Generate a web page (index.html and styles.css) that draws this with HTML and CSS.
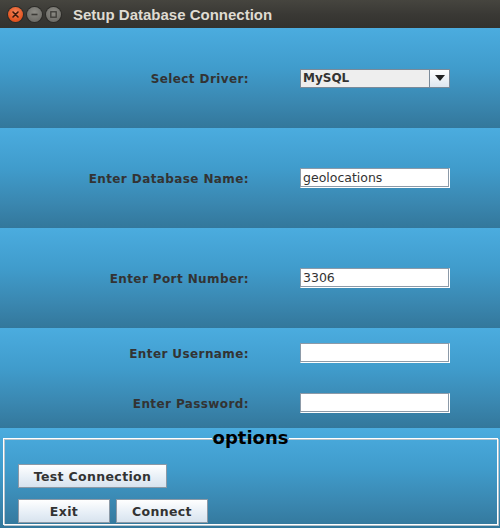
FILE: index.html
```html
<!DOCTYPE html>
<html>
<head>
<meta charset="utf-8">
<link rel="stylesheet" href="styles.css">
</head>
<body>
<div class="window">
  <div class="titlebar">
    <div class="wbtns">
      <span class="wbtn close"><svg width="15" height="15" viewBox="0 0 15 15"><path d="M5 5l5 5M10 5l-5 5" stroke="#3a1a0c" stroke-width="1.6" stroke-linecap="round"/></svg></span>
      <span class="wbtn"><svg width="15" height="15" viewBox="0 0 15 15"><path d="M4.5 7.5h6" stroke="#3c3b37" stroke-width="1.6"/></svg></span>
      <span class="wbtn"><svg width="15" height="15" viewBox="0 0 15 15"><rect x="4.8" y="4.8" width="5.4" height="5.4" fill="none" stroke="#3c3b37" stroke-width="1.3"/></svg></span>
    </div>
    <div class="title">Setup Database Connection</div>
  </div>

  <div class="panel">
    <div class="row">
      <label class="lbl">Select Driver:</label>
      <div class="combo"><span class="combo-text">MySQL</span><span class="combo-arrow"><svg width="10" height="6" viewBox="0 0 10 6"><path d="M0 0h10L5 6z" fill="#222"/></svg></span></div>
    </div>
  </div>

  <div class="panel">
    <div class="row">
      <label class="lbl">Enter Database Name:</label>
      <div class="field">geolocations</div>
    </div>
  </div>

  <div class="panel">
    <div class="row">
      <label class="lbl">Enter Port Number:</label>
      <div class="field">3306</div>
    </div>
  </div>

  <div class="panel two">
    <div class="row">
      <label class="lbl">Enter Username:</label>
      <div class="field"></div>
    </div>
    <div class="row">
      <label class="lbl">Enter Password:</label>
      <div class="field"></div>
    </div>
  </div>

  <div class="panel last">
    <fieldset class="options">
      <legend>options</legend>
      <div class="btnrow"><button class="btn wide">Test Connection</button></div>
      <div class="btnrow"><button class="btn">Exit</button><button class="btn">Connect</button></div>
    </fieldset>
  </div>
</div>
</body>
</html>
```

FILE: styles.css
```css
html, body {
  margin: 0;
  padding: 0;
  background: #3a7ea3;
}
.window {
  width: 500px;
  height: 528px;
  display: flex;
  flex-direction: column;
  overflow: hidden;
  font-family: "DejaVu Sans", sans-serif;
}
.titlebar {
  height: 28px;
  flex: none;
  display: flex;
  align-items: center;
  background: linear-gradient(#46453f, #3a3935 50%, #33322e);
  box-sizing: border-box;
}
.wbtns {
  display: flex;
  gap: 4px;
  padding-left: 8px;
}
.wbtn {
  width: 15px;
  height: 15px;
  border-radius: 50%;
  background: radial-gradient(circle at 50% 35%, #8c8b85, #64635e);
  box-shadow: 0 0 0 1px #2c2b28;
  display: flex;
}
.wbtn.close {
  background: radial-gradient(circle at 50% 35%, #f4845a, #e2521d 70%);
}
.title {
  margin-left: 12px;
  color: #dfdbd2;
  font-family: "Liberation Sans", sans-serif;
  font-weight: bold;
  font-size: 15px;
}
.panel {
  height: 100px;
  flex: none;
  display: flex;
  flex-direction: column;
  justify-content: center;
  background: linear-gradient(#4bacdf, #409ccc 40%, #3a87b0 75%, #33779b);
}
.panel.two {
  justify-content: stretch;
}
.panel.two .row {
  flex: 1;
}
.row {
  display: grid;
  grid-template-columns: 250px 150px;
  column-gap: 50px;
  align-items: center;
}
.lbl {
  text-align: right;
  padding-right: 1px;
  padding-top: 2px;
  font-weight: bold;
  font-size: 12px;
  letter-spacing: 0.4px;
  color: #333333;
}
.combo {
  height: 19px;
  box-sizing: border-box;
  border: 1px solid #7a8a99;
  background: #eeeeee;
  display: flex;
}
.combo-text {
  flex: 1;
  padding-left: 2px;
  font-weight: bold;
  font-size: 12px;
  line-height: 17px;
  color: #333;
}
.combo-arrow {
  width: 19px;
  border-left: 1px solid #7a8a99;
  background: linear-gradient(#ffffff, #dde6ef);
  display: flex;
  align-items: center;
  justify-content: center;
}
.field {
  height: 20px;
  box-sizing: border-box;
  border: 1px solid #8c9aa8;
  border-right-color: #ffffff;
  border-bottom-color: #ffffff;
  box-shadow: inset -1px -1px 0 #8c9aa8;
  background: #ffffff;
  padding-left: 2px;
  font-size: 12.5px;
  line-height: 18px;
  color: #333;
}
.panel.last {
  justify-content: flex-start;
}
.options {
  margin: 0 2px 2px 3px;
  padding: 16px 14px 0 14px;
  height: 97px;
  box-sizing: border-box;
  border: 1px solid #ffffff;
  box-shadow: inset 1px 1px 0 #b8c4cc, 1px 1px 0 #b8c4cc;
  display: flex;
  flex-direction: column;
  gap: 11px;
}
.options legend {
  margin: 0 auto;
  padding: 0 1px;
  font-weight: bold;
  font-size: 18px;
  line-height: 20px;
  color: #000;
}
.btnrow {
  display: flex;
  gap: 6px;
}
.btn {
  width: 92px;
  height: 24px;
  box-sizing: border-box;
  border: 1px solid #8c99a6;
  background: linear-gradient(#ffffff, #e6eef6 60%, #d8e3ee);
  font-family: "DejaVu Sans", sans-serif;
  font-weight: bold;
  font-size: 12.5px;
  letter-spacing: 0.35px;
  color: #333;
  padding: 0;
}
.btn.wide {
  width: 149px;
}
```
